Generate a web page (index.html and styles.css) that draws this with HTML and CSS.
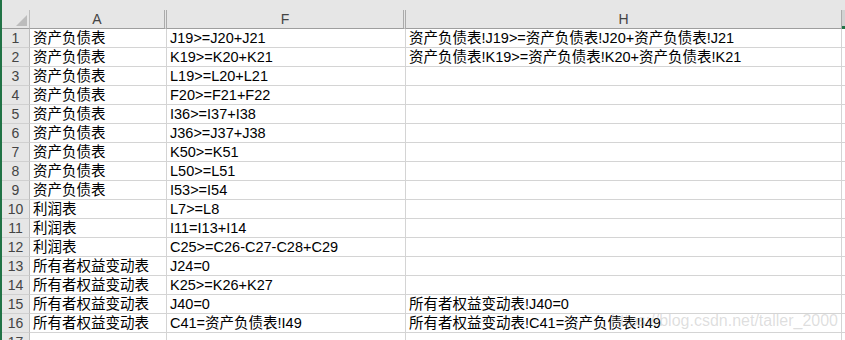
FILE: index.html
```html
<!DOCTYPE html>
<html lang="zh">
<head>
<meta charset="utf-8">
<title>Sheet</title>
<link rel="stylesheet" href="styles.css">
</head>
<body>
<div class="frame">
  <div class="topstrip"></div>
  <div class="sheet">
    <div class="corner"><span class="tri"></span></div>
    <div class="ch dbl">A</div>
    <div class="ch dbl">F</div>
    <div class="ch">H</div>
    <div class="ch sel"></div>

    <div class="rh">1</div><div class="c">资产负债表</div><div class="c">J19&gt;=J20+J21</div><div class="c">资产负债表!J19&gt;=资产负债表!J20+资产负债表!J21</div><div class="c"></div>
    <div class="rh">2</div><div class="c">资产负债表</div><div class="c">K19&gt;=K20+K21</div><div class="c">资产负债表!K19&gt;=资产负债表!K20+资产负债表!K21</div><div class="c"></div>
    <div class="rh">3</div><div class="c">资产负债表</div><div class="c">L19&gt;=L20+L21</div><div class="c"></div><div class="c"></div>
    <div class="rh">4</div><div class="c">资产负债表</div><div class="c">F20&gt;=F21+F22</div><div class="c"></div><div class="c"></div>
    <div class="rh">5</div><div class="c">资产负债表</div><div class="c">I36&gt;=I37+I38</div><div class="c"></div><div class="c"></div>
    <div class="rh">6</div><div class="c">资产负债表</div><div class="c">J36&gt;=J37+J38</div><div class="c"></div><div class="c"></div>
    <div class="rh">7</div><div class="c">资产负债表</div><div class="c">K50&gt;=K51</div><div class="c"></div><div class="c"></div>
    <div class="rh">8</div><div class="c">资产负债表</div><div class="c">L50&gt;=L51</div><div class="c"></div><div class="c"></div>
    <div class="rh">9</div><div class="c">资产负债表</div><div class="c">I53&gt;=I54</div><div class="c"></div><div class="c"></div>
    <div class="rh">10</div><div class="c">利润表</div><div class="c">L7&gt;=L8</div><div class="c"></div><div class="c"></div>
    <div class="rh">11</div><div class="c">利润表</div><div class="c">I11=I13+I14</div><div class="c"></div><div class="c"></div>
    <div class="rh">12</div><div class="c">利润表</div><div class="c">C25&gt;=C26-C27-C28+C29</div><div class="c"></div><div class="c"></div>
    <div class="rh">13</div><div class="c">所有者权益变动表</div><div class="c">J24=0</div><div class="c"></div><div class="c"></div>
    <div class="rh">14</div><div class="c">所有者权益变动表</div><div class="c">K25&gt;=K26+K27</div><div class="c"></div><div class="c"></div>
    <div class="rh">15</div><div class="c">所有者权益变动表</div><div class="c">J40=0</div><div class="c">所有者权益变动表!J40=0</div><div class="c"></div>
    <div class="rh">16</div><div class="c">所有者权益变动表</div><div class="c">C41=资产负债表!I49</div><div class="c">所有者权益变动表!C41=资产负债表!I49</div><div class="c"></div>
    <div class="rh">17</div><div class="c"></div><div class="c"></div><div class="c"></div><div class="c"></div>
  </div>
  <div class="watermark">https://blog.csdn.net/taller_2000</div>
</div>
</body>
</html>
```
FILE: styles.css
```css
html, body {
  margin: 0;
  padding: 0;
  background: #ffffff;
}

.frame {
  position: relative;
  width: 845px;
  height: 340px;
  overflow: hidden;
  box-sizing: border-box;
  border-left: 2px solid #217346;
  font-family: "Liberation Sans", "Noto Sans CJK SC", sans-serif;
}

.topstrip {
  height: 10px;
  background: #e6e6e6;
}

.sheet {
  display: grid;
  grid-template-columns: 28px 137px 239px 436px 60px;
  grid-auto-rows: 19px;
  width: 960px;
}

.corner {
  background: #e6e6e6;
  border-right: 1px solid #bdbdbd;
  border-bottom: 1px solid #9e9e9e;
  box-sizing: border-box;
  display: flex;
  justify-content: flex-end;
  align-items: flex-end;
  padding: 0 2px 2px 0;
}

.tri {
  width: 11px;
  height: 11px;
  background: #bcbcbc;
  clip-path: polygon(100% 0, 100% 100%, 0 100%);
}

.ch {
  background: #e6e6e6;
  border-right: 1px solid #ababab;
  border-bottom: 1px solid #9e9e9e;
  box-sizing: border-box;
  color: #444444;
  font-size: 14px;
  line-height: 18px;
  text-align: center;
}

.ch.dbl {
  border-right: 3px double #ababab;
}

.ch.sel {
  background: #d2d2d2;
  border-bottom: none;
  box-shadow: inset 0 -3px 0 #217346;
}

.rh {
  background: #e6e6e6;
  border-right: 1px solid #bdbdbd;
  border-bottom: 1px solid #d0d0d0;
  box-sizing: border-box;
  color: #444444;
  font-size: 14px;
  line-height: 19px;
  text-align: center;
}

.c {
  border-right: 1px solid #d4d4d4;
  border-bottom: 1px solid #d4d4d4;
  box-sizing: border-box;
  padding: 1px 0 0 3px;
  font-size: 14.5px;
  line-height: 17px;
  color: #000000;
  white-space: nowrap;
  overflow: hidden;
}

.watermark {
  position: absolute;
  right: 7px;
  top: 312px;
  font-size: 16px;
  line-height: 18px;
  color: rgba(160, 160, 160, 0.35);
  white-space: nowrap;
  pointer-events: none;
}
```
